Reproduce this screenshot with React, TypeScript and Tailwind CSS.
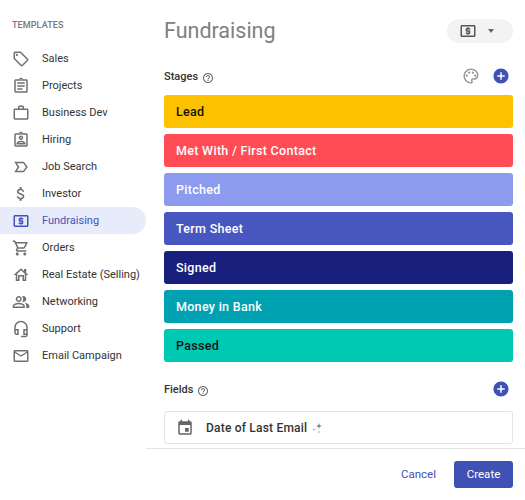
import type { ReactNode } from 'react';

const Icon = ({ d, className, children }: { d?: string; className: string; children?: ReactNode }) => (
  <svg viewBox="0 0 24 24" fill="currentColor" fillRule="evenodd" className={className}>
    {d && <path d={d} />}
    {children}
  </svg>
);

const moneyPath =
  'M11 17h2v-1h1c.55 0 1-.45 1-1v-3c0-.55-.45-1-1-1h-3v-1h4V8h-2V7h-2v1h-1c-.55 0-1 .45-1 1v3c0 .55.45 1 1 1h3v1H9v2h2v1zm9-13H4c-1.11 0-1.99.89-1.99 2L2 18c0 1.11.89 2 2 2h16c1.11 0 2-.89 2-2V6c0-1.11-.89-2-2-2zm0 14H4V6h16v12z';
const helpPath =
  'M11 18h2v-2h-2v2zm1-16C6.48 2 2 6.48 2 12s4.48 10 10 10 10-4.48 10-10S17.52 2 12 2zm0 18c-4.41 0-8-3.59-8-8s3.59-8 8-8 8 3.59 8 8-3.59 8-8 8zm0-14c-2.21 0-4 1.79-4 4h2c0-1.1.9-2 2-2s2 .9 2 2c0 2-3 1.75-3 5h2c0-2.25 3-2.5 3-5 0-2.21-1.79-4-4-4z';
const addPath =
  'M12 2C6.48 2 2 6.48 2 12s4.48 10 10 10 10-4.48 10-10S17.52 2 12 2zm5 11h-4v4h-2v-4H7v-2h4V7h2v4h4v2z';

const templates = [
  {
    name: 'Sales',
    d: 'M21.41 11.58l-9-9C12.05 2.22 11.55 2 11 2H4c-1.1 0-2 .9-2 2v7c0 .55.22 1.05.59 1.42l9 9c.36.36.86.58 1.41.58s1.05-.22 1.41-.59l7-7c.37-.36.59-.86.59-1.41s-.23-1.06-.59-1.42zM13 20.01L4 11V4h7v-.01l9 9-7 7.02zM6.5 5a1.5 1.5 0 1 0 0 3 1.5 1.5 0 0 0 0-3z',
  },
  {
    name: 'Projects',
    d: 'M7 15h7v2H7zm0-4h10v2H7zm0-4h10v2H7zm12-4h-4.18C14.4 1.84 13.3 1 12 1c-1.3 0-2.4.84-2.82 2H5c-.14 0-.27.01-.4.04-.39.08-.74.28-1.01.55-.18.18-.33.4-.43.64-.1.23-.16.49-.16.77v14c0 .27.06.54.16.78s.25.45.43.64c.27.27.62.47 1.01.55.13.02.26.03.4.03h14c1.1 0 2-.9 2-2V5c0-1.1-.9-2-2-2zm-7-.25c.41 0 .75.34.75.75s-.34.75-.75.75-.75-.34-.75-.75.34-.75.75-.75zM19 19H5V5h14v14z',
  },
  {
    name: 'Business Dev',
    d: 'M14 6V4h-4v2h4zM4 8v11h16V8H4zm16-2c1.11 0 2 .89 2 2v11c0 1.11-.89 2-2 2H4c-1.11 0-2-.89-2-2l.01-11c0-1.11.88-2 1.99-2h4V4c0-1.11.89-2 2-2h4c1.11 0 2 .89 2 2v2h4z',
  },
  {
    name: 'Hiring',
    d: 'M19 3h-4.18C14.4 1.84 13.3 1 12 1s-2.4.84-2.82 2H5c-.14 0-.27.01-.4.04-.39.08-.74.28-1.01.55-.18.18-.33.4-.43.64-.1.23-.16.49-.16.77v14c0 .27.06.54.16.78s.25.45.43.64c.27.27.62.47 1.01.55.13.02.26.03.4.03h14c1.1 0 2-.9 2-2V5c0-1.1-.9-2-2-2zm-7-.25c.41 0 .75.34.75.75s-.34.75-.75.75-.75-.34-.75-.75.34-.75.75-.75zM19 19H5V5h14v14zM12 12c1.65 0 3-1.35 3-3s-1.35-3-3-3-3 1.35-3 3 1.35 3 3 3zm0-4c.55 0 1 .45 1 1s-.45 1-1 1-1-.45-1-1 .45-1 1-1zm6 8.43c0-2.5-3.97-3.43-6-3.43s-6 .93-6 3.43V18h12v-1.57zM8.31 16c.69-.56 2.38-1.12 3.69-1.12s3.01.56 3.69 1.12H8.31z',
  },
  {
    name: 'Job Search',
    d: 'M15 19H3l4.5-7L3 5h12c.65 0 1.26.31 1.63.84L21 12l-4.37 6.16c-.37.52-.98.84-1.63.84zm-8.5-2H15l3.5-5L15 7H6.5l3.5 5-3.5 5z',
  },
  {
    name: 'Investor',
    d: 'M11.8 10.9c-2.27-.59-3-1.2-3-2.15 0-1.09 1.01-1.85 2.7-1.85 1.78 0 2.44.85 2.5 2.1h2.21c-.07-1.72-1.12-3.3-3.21-3.81V3h-3v2.16c-1.94.42-3.5 1.68-3.5 3.61 0 2.31 1.91 3.46 4.7 4.13 2.5.6 3 1.48 3 2.41 0 .69-.49 1.79-2.7 1.79-2.06 0-2.87-.92-2.98-2.1h-2.2c.12 2.19 1.76 3.42 3.68 3.83V21h3v-2.15c1.95-.37 3.5-1.5 3.5-3.55 0-2.84-2.43-3.81-4.7-4.4z',
  },
  { name: 'Fundraising', d: moneyPath, active: true },
  {
    name: 'Orders',
    d: 'M15.55 13c.75 0 1.41-.41 1.75-1.03l3.58-6.49c.37-.66-.11-1.48-.87-1.48H5.21l-.94-2H1v2h2l3.6 7.59-1.35 2.44C4.52 15.37 5.48 17 7 17h12v-2H7l1.1-2h7.45zM6.16 6h12.15l-2.76 5H8.53L6.16 6zM7 18c-1.1 0-1.99.9-1.99 2S5.9 22 7 22s2-.9 2-2-.9-2-2-2zm10 0c-1.1 0-1.99.9-1.99 2s.89 2 1.99 2 2-.9 2-2-.9-2-2-2z',
  },
  {
    name: 'Real Estate (Selling)',
    d: 'M19 9.3V4h-3v2.6L12 3 2 12h3v8h5v-6h4v6h5v-8h3l-3-2.7zM17 18h-1v-6H8v6H7v-7.81l5-4.5 5 4.5V18z',
  },
  {
    name: 'Networking',
    d: 'M16.67 13.13C18.04 14.06 19 15.32 19 17v3h4v-3c0-2.18-3.57-3.47-6.33-3.87zM15 12c2.21 0 4-1.79 4-4s-1.79-4-4-4c-.47 0-.91.1-1.33.24C14.5 5.27 15 6.58 15 8s-.5 2.73-1.33 3.76c.42.14.86.24 1.33.24zM9 12c2.21 0 4-1.79 4-4s-1.79-4-4-4-4 1.79-4 4 1.79 4 4 4zm0-6c1.1 0 2 .9 2 2s-.9 2-2 2-2-.9-2-2 .9-2 2-2zM9 13c-2.67 0-8 1.34-8 4v3h16v-3c0-2.66-5.33-4-8-4zm6 5H3v-.99C3.2 16.29 6.3 15 9 15s5.8 1.29 6 2v1z',
  },
  {
    name: 'Support',
    d: 'M12 1c-4.97 0-9 4.03-9 9v7c0 1.66 1.34 3 3 3h3v-8H5v-2c0-3.87 3.13-7 7-7s7 3.13 7 7v2h-4v8h4v1h-7v2h6c1.66 0 3-1.34 3-3V10c0-4.97-4.03-9-9-9zM7 14v4H6c-.55 0-1-.45-1-1v-3h2zm12 4h-2v-4h2v4z',
  },
  {
    name: 'Email Campaign',
    d: 'M20 4H4c-1.1 0-1.99.9-1.99 2L2 18c0 1.1.9 2 2 2h16c1.1 0 2-.9 2-2V6c0-1.1-.9-2-2-2zm0 14H4V8l8 5 8-5v10zm-8-7L4 6h16l-8 5z',
  },
];

const stages = [
  { name: 'Lead', className: 'bg-[#fdc100] text-[#111111]' },
  { name: 'Met With / First Contact', className: 'bg-[#ff4c55] text-white' },
  { name: 'Pitched', className: 'bg-[#8c9bee] text-white' },
  { name: 'Term Sheet', className: 'bg-[#4757bf] text-white' },
  { name: 'Signed', className: 'bg-[#191f7d] text-white' },
  { name: 'Money in Bank', className: 'bg-[#00a1b1] text-white' },
  { name: 'Passed', className: 'bg-[#00c9b3] text-[#111111]' },
];

function SectionLabel({ label }: { label: string }) {
  return (
    <div className="flex items-center gap-[4px]">
      <span className="text-[11px] leading-none font-medium text-[#333333]">{label}</span>
      <Icon d={helpPath} className="mt-[3px] h-[12px] w-[12px] shrink-0 text-[#666666]" />
    </div>
  );
}

export default function App() {
  return (
    <div className="flex h-[500px] w-[525px] overflow-hidden bg-white font-['Roboto',sans-serif]">
      <aside className="w-[146px] shrink-0 pt-[20px]">
        <p className="pl-[12px] text-[9px] leading-[11px] font-medium tracking-[0.1px] text-[#777777]">TEMPLATES</p>
        <ul className="mt-[14px]">
          {templates.map((t) => (
            <li
              key={t.name}
              className={
                t.active
                  ? 'flex h-[27px] items-center rounded-r-full bg-[#e8ebfa] pl-[12px] text-[#4353b8]'
                  : 'flex h-[27px] items-center pl-[12px] text-[#333333]'
              }
            >
              <Icon
                d={t.d}
                className={t.active ? 'h-[18px] w-[18px] shrink-0 text-[#4353b8]' : 'h-[18px] w-[18px] shrink-0 text-[#707070]'}
              />
              <span className="mt-[2px] ml-[12px] text-[11px] whitespace-nowrap">{t.name}</span>
            </li>
          ))}
        </ul>
      </aside>

      <main className="flex min-w-0 flex-1 flex-col">
        <div className="flex-1 pt-[19px] pr-[12px] pl-[18px]">
          <div className="flex h-[24px] items-center justify-between">
            <h1 className="text-[21.5px] leading-none font-normal text-[#808080]">Fundraising</h1>
            <button type="button" className="flex h-[24px] w-[66px] items-center gap-[11px] rounded-full bg-[#f3f3f3] pl-[11.5px]">
              <Icon d={moneyPath} className="h-[18px] w-[18px] text-[#555555]" />
              <span className="h-0 w-0 border-x-[3.5px] border-t-[4px] border-x-transparent border-t-[#666666]" />
            </button>
          </div>

          <div className="mt-[24px] flex h-[18px] items-center justify-between pr-[3px]">
            <SectionLabel label="Stages" />
            <div className="flex items-center gap-[12px]">
              <Icon className="h-[18px] w-[18px] text-[#999999]">
                <path d="M12 22C6.49 22 2 17.51 2 12S6.49 2 12 2s10 4.04 10 9c0 3.31-2.69 6-6 6h-1.77c-.28 0-.5.22-.5.5 0 .12.05.23.13.33.41.47.64 1.06.64 1.67A2.5 2.5 0 0 1 12 22zm0-18c-4.41 0-8 3.59-8 8s3.59 8 8 8c.28 0 .5-.22.5-.5a.54.54 0 0 0-.14-.35c-.41-.46-.63-1.05-.63-1.65a2.5 2.5 0 0 1 2.5-2.5H16c2.21 0 4-1.79 4-4 0-3.86-3.59-7-8-7z" />
                <circle cx="6.5" cy="11.5" r="1.5" />
                <circle cx="9.5" cy="7.5" r="1.5" />
                <circle cx="14.5" cy="7.5" r="1.5" />
                <circle cx="17.5" cy="11.5" r="1.5" />
              </Icon>
              <Icon d={addPath} className="h-[18px] w-[18px] text-[#3f51b5]" />
            </div>
          </div>

          <div className="mt-[10px] flex flex-col gap-[6px]">
            {stages.map((s) => (
              <div
                key={s.name}
                className={`flex h-[33px] items-center rounded-[3px] pt-[1px] pl-[12px] text-[12.5px] font-medium tracking-[0.3px] ${s.className}`}
              >
                {s.name}
              </div>
            ))}
          </div>

          <div className="mt-[18px] flex h-[18px] items-center justify-between pr-[3px]">
            <SectionLabel label="Fields" />
            <Icon d={addPath} className="h-[18px] w-[18px] text-[#3f51b5]" />
          </div>

          <div className="mt-[13px] flex h-[33px] items-center rounded-[3px] border border-[#e4e4e4] pl-[11px]">
            <Icon
              d="M17 12h-5v5h5v-5zM16 1v2H8V1H6v2H5c-1.11 0-1.99.9-1.99 2L3 19c0 1.1.89 2 2 2h14c1.1 0 2-.9 2-2V5c0-1.1-.9-2-2-2h-1V1h-2zm3 18H5V8h14v11z"
              className="h-[18px] w-[18px] shrink-0 text-[#666666]"
            />
            <span className="ml-[12px] text-[12px] font-medium tracking-[0.2px] text-[#333333]">Date of Last Email</span>
            <svg viewBox="0 0 12 12" fill="#777777" className="mt-[1px] ml-[4px] h-[12px] w-[12px]">
              <path d="M8 1l.7 2.3L11 4l-2.3.7L8 7l-.7-2.3L5 4l2.3-.7z" />
              <path d="M3 6l.35 1.15L4.5 7.5l-1.15.35L3 9l-.35-1.15L1.5 7.5l1.15-.35z" />
              <circle cx="8" cy="10" r="0.7" />
            </svg>
          </div>
        </div>

        <footer className="flex h-[52px] items-center justify-end gap-[18px] border-t border-[#e4e4e4] pr-[12px]">
          <button type="button" className="mt-[1px] text-[11.5px] text-[#3f51b5]">Cancel</button>
          <button type="button" className="h-[27px] w-[59px] rounded-[3px] bg-[#3f51b5] text-[11.5px] text-white">
            Create
          </button>
        </footer>
      </main>
    </div>
  );
}
